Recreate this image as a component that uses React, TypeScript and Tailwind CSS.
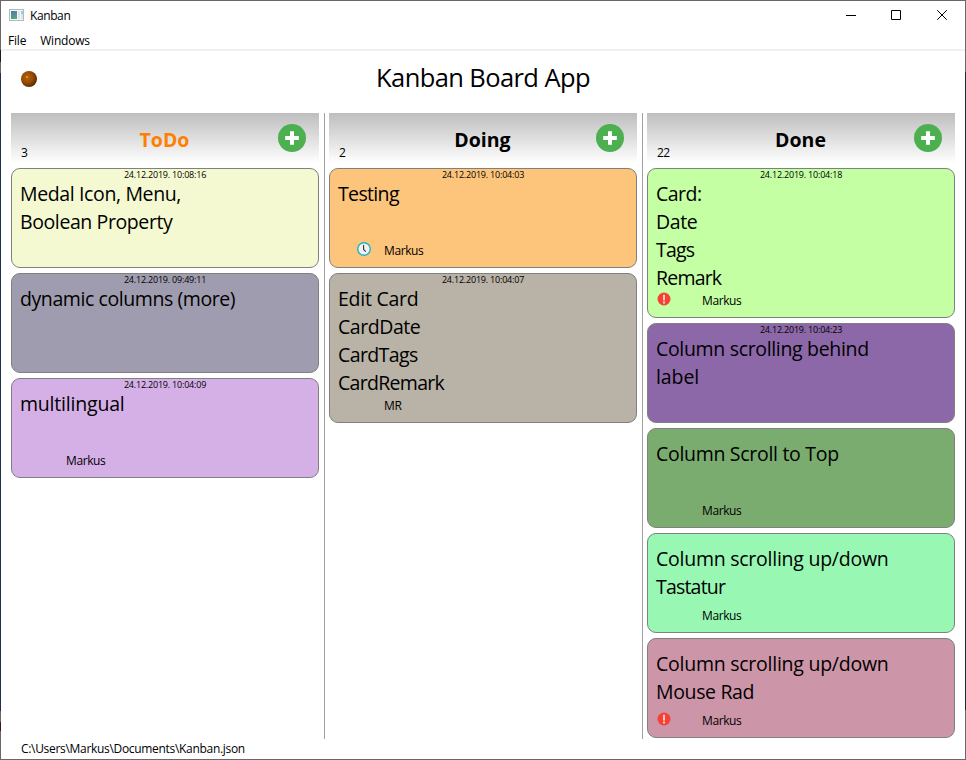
import React from "react";

type Line = [text: string, tracking: string];

type CardData = {
  date?: string;
  lines: Line[];
  color: string;
  tag?: string;
  icon?: "clock" | "alert";
  tall?: boolean;
};

type ColumnData = { title: string; titleClass: string; count: number; cards: CardData[] };

const columns: ColumnData[] = [
  {
    title: "ToDo",
    titleClass: "text-[#ff8000]",
    count: 3,
    cards: [
      {
        date: "24.12.2019. 10:08:16",
        lines: [
          ["Medal Icon, Menu,", "tracking-[-0.37px]"],
          ["Boolean Property", "tracking-[-0.4px]"],
        ],
        color: "bg-[#f5f9d1]",
      },
      {
        date: "24.12.2019. 09:49:11",
        lines: [["dynamic columns (more)", "tracking-[-0.42px]"]],
        color: "bg-[#a09caf]",
      },
      {
        date: "24.12.2019. 10:04:09",
        lines: [["multilingual", "tracking-[-0.2px]"]],
        color: "bg-[#d5b0e6]",
        tag: "Markus",
      },
    ],
  },
  {
    title: "Doing",
    titleClass: "text-black",
    count: 2,
    cards: [
      {
        date: "24.12.2019. 10:04:03",
        lines: [["Testing", "tracking-[-0.65px]"]],
        color: "bg-[#fdc57b]",
        tag: "Markus",
        icon: "clock",
      },
      {
        date: "24.12.2019. 10:04:07",
        lines: [
          ["Edit Card", "tracking-[-0.25px]"],
          ["CardDate", "tracking-[-0.45px]"],
          ["CardTags", "tracking-[-0.6px]"],
          ["CardRemark", "tracking-[-0.7px]"],
        ],
        color: "bg-[#b9b2a6]",
        tag: "MR",
        tall: true,
      },
    ],
  },
  {
    title: "Done",
    titleClass: "text-black",
    count: 22,
    cards: [
      {
        date: "24.12.2019. 10:04:18",
        lines: [
          ["Card:", "tracking-[-0.5px]"],
          ["Date", "tracking-[-0.4px]"],
          ["Tags", "tracking-[-0.8px]"],
          ["Remark", "tracking-[-0.8px]"],
        ],
        color: "bg-[#c4ffa4]",
        tag: "Markus",
        icon: "alert",
        tall: true,
      },
      {
        date: "24.12.2019. 10:04:23",
        lines: [
          ["Column scrolling behind", "tracking-[-0.33px]"],
          ["label", "tracking-[-0.1px]"],
        ],
        color: "bg-[#8d68a8]",
      },
      { lines: [["Column Scroll to Top", "tracking-[-0.3px]"]], color: "bg-[#7bac6f]", tag: "Markus" },
      {
        lines: [
          ["Column scrolling up/down", "tracking-[-0.25px]"],
          ["Tastatur", "tracking-[-0.8px]"],
        ],
        color: "bg-[#98f7b3]",
        tag: "Markus",
      },
      {
        lines: [
          ["Column scrolling up/down", "tracking-[-0.25px]"],
          ["Mouse Rad", "tracking-[-0.35px]"],
        ],
        color: "bg-[#cd95a8]",
        tag: "Markus",
        icon: "alert",
      },
    ],
  },
];

function AddIcon() {
  return (
    <svg className="mt-[11px] h-7 w-7" viewBox="0 0 28 28">
      <circle cx="14" cy="14" r="14" fill="#4caf50" />
      <path d="M12 7.2h4V12h4.8v4H16v4.8h-4V16H7.2v-4H12z" fill="#fff" />
    </svg>
  );
}

function ClockIcon() {
  return (
    <svg className="h-[14px] w-[14px]" viewBox="0 0 14 14">
      <circle cx="7" cy="7" r="6.3" fill="#f2f2f2" stroke="#22b3c6" strokeWidth="1.4" />
      <path d="M6.6 3v4.4l2.2 2.2" fill="none" stroke="#333" strokeWidth="1.1" />
    </svg>
  );
}

function AlertIcon() {
  return (
    <svg className="h-[14px] w-[14px]" viewBox="0 0 14 14">
      <circle cx="7" cy="7" r="6.5" fill="#f44336" />
      <path d="M6 2.8h2v5.6H6zM6 9.6h2v1.8H6z" fill="#ffc9c5" />
    </svg>
  );
}

function Card({ card }: { card: CardData }) {
  return (
    <article
      className={`flex flex-col rounded-[9px] border border-[#808080] ${card.tall ? "h-[150px]" : "h-[100px]"} ${card.color}`}
    >
      <div className="h-[11px] text-center text-[9px] leading-[12px] tracking-[-0.2px]">{card.date}</div>
      <div className="flex-1 pl-2 text-[19.5px] leading-7 whitespace-nowrap">
        {card.lines.map(([text, tracking]) => (
          <div key={text} className={tracking}>
            {text}
          </div>
        ))}
      </div>
      <div className="flex h-[25px] items-start">
        <div className={`w-[54px] ${card.icon === "clock" ? "pl-[27px]" : "pl-[9px]"}`}>
          {card.icon === "clock" && <ClockIcon />}
          {card.icon === "alert" && <AlertIcon />}
        </div>
        <span className="text-[12px] leading-[18px] tracking-[-0.4px]">{card.tag}</span>
      </div>
    </article>
  );
}

function Column({ column }: { column: ColumnData }) {
  return (
    <section className="flex w-[308px] flex-col">
      <header className="mb-[5px] flex h-[50px] justify-between bg-linear-to-b from-[#bebebe] to-white">
        <span className="w-[41px] pt-[30px] pl-[10px] text-[12px] leading-5 tracking-[-0.6px]">{column.count}</span>
        <h2 className={`pt-[13px] pr-px text-[19.5px] leading-7 font-bold ${column.titleClass}`}>{column.title}</h2>
        <div className="w-[41px]">
          <AddIcon />
        </div>
      </header>
      <div className="flex flex-col gap-[5px]">
        {column.cards.map((card, i) => (
          <Card key={i} card={card} />
        ))}
      </div>
    </section>
  );
}

export default function App() {
  return (
    <div className="flex h-[760px] w-[966px] flex-col overflow-hidden bg-white font-['Open_Sans','Noto_Sans',sans-serif] text-black">
      <div className="h-px shrink-0 bg-[#6b6768]" />
      <div className="flex h-[758px]">
        <div className="flex w-px flex-col">
          <div className="h-[49px] bg-[#6b6768]" />
          <div className="h-[12px] bg-[#1e1b20]" />
          <div className="h-[11px] bg-[#6b6768]" />
          <div className="h-[638px] bg-[#1b3350]" />
          <div className="h-[11px] bg-[#6b6768]" />
          <div className="h-[9px] bg-[#451329]" />
          <div className="flex-1 bg-[#6b6768]" />
        </div>
        <div className="flex w-[964px] flex-col">
          <div className="flex h-[29px] items-center pl-2">
            <svg className="h-[13px] w-[16px]" viewBox="0 0 16 13">
              <defs>
                <linearGradient id="pane" x1="0" y1="0" x2="0.4" y2="1">
                  <stop offset="0" stopColor="#5279a5" />
                  <stop offset="1" stopColor="#55a582" />
                </linearGradient>
              </defs>
              <rect x="0.5" y="0.5" width="14" height="11" fill="#f4f6f7" stroke="#b4b9be" />
              <rect x="2" y="2" width="6" height="8" fill="url(#pane)" />
              <rect x="9" y="2" width="2" height="8" fill="#dbe4e8" />
              <rect x="12" y="2" width="2" height="3" fill="#a8c8dc" />
              <rect x="12" y="5" width="2" height="5" fill="#d4e8dc" />
            </svg>
            <span className="ml-[5px] flex-1 text-[12px] tracking-[-0.4px]">Kanban</span>
            <svg className="mr-[17px] h-[13px] w-[103px]" viewBox="0 0 103 13" fill="none" stroke="#000">
              <path d="M1 6.5h10M46.5 1.5h9v9h-9z" />
              <path d="M92.2 1.2l9.6 9.6M101.8 1.2l-9.6 9.6" />
            </svg>
          </div>
          <nav className="flex h-[21px] items-center gap-[14px] border-b-2 border-[#f0f0f0] pt-[2px] pl-[7px] text-[12px] tracking-[-0.2px]">
            <span>File</span>
            <span>Windows</span>
          </nav>
          <div className="grid h-[62px] grid-cols-[1fr_auto_1fr]">
            <svg className="mt-5 ml-5 h-4 w-4" viewBox="0 0 16 16">
              <defs>
                <radialGradient id="ball" cx="0.4" cy="0.4" r="0.65">
                  <stop offset="0" stopColor="#b9620c" />
                  <stop offset="0.55" stopColor="#954a04" />
                  <stop offset="1" stopColor="#4f2500" />
                </radialGradient>
              </defs>
              <circle cx="8" cy="8" r="8" fill="url(#ball)" />
              <circle cx="6" cy="6" r="1" fill="#e09a55" />
            </svg>
            <h1 className="pt-[8px] text-[25.5px] leading-9 tracking-[-0.6px]">Kanban Board App</h1>
            <div />
          </div>
          <main className="flex h-[626px] gap-[4px] pl-[10px]">
            <Column column={columns[0]} />
            <div className="ml-px w-px bg-[#a0a0a0]" />
            <Column column={columns[1]} />
            <div className="ml-px w-px bg-[#a0a0a0]" />
            <Column column={columns[2]} />
          </main>
          <footer className="flex h-[20px] items-center pl-5 text-[12px] tracking-[-0.31px]">
            C:\Users\Markus\Documents\Kanban.json
          </footer>
        </div>
        <div className="flex w-px flex-col">
          <div className="h-[71px] bg-[#6b6768]" />
          <div className="h-[638px] bg-[#1b2b3b]" />
          <div className="flex-1 bg-[#6b6768]" />
        </div>
      </div>
      <div className="h-px shrink-0 bg-[#6b6768]" />
    </div>
  );
}
